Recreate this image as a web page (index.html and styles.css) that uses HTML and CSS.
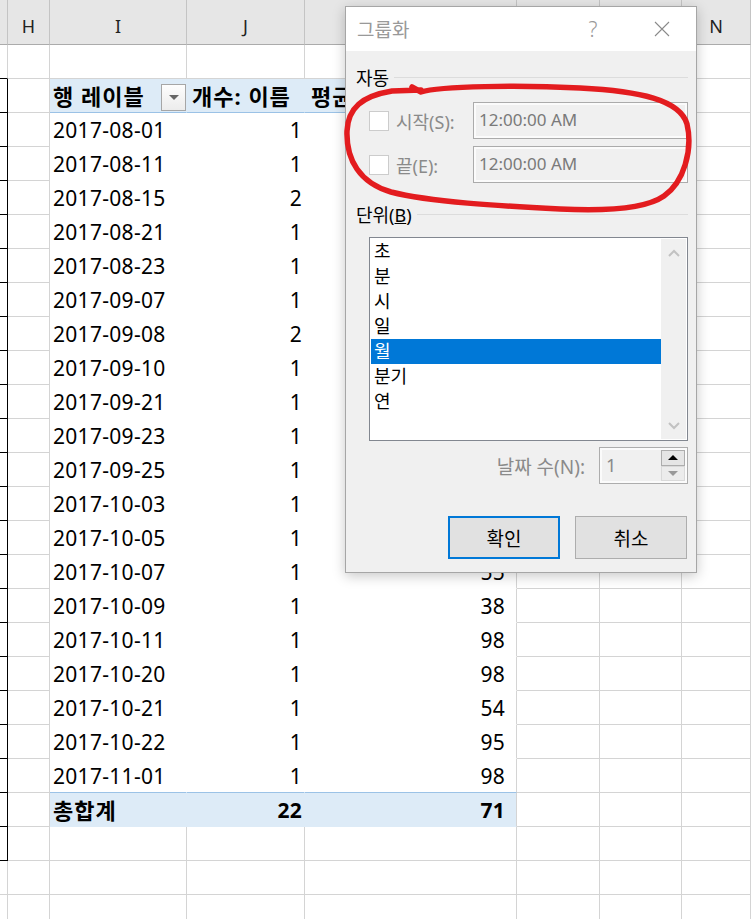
FILE: index.html
```html
<!DOCTYPE html>
<html lang="ko">
  <head>
    <meta charset="UTF-8" />
    <title>그룹화</title>
    <link rel="stylesheet" href="styles.css">
  </head>
  <body>
    <table class="sheet">
      <colgroup>
        <col style="width:8px"><col style="width:42px"><col style="width:137px"><col style="width:118px">
        <col style="width:212px"><col style="width:83px"><col style="width:82px"><col style="width:69px">
      </colgroup>
      <thead>
        <!-- K, L, M sit under the dialog -->
        <tr><th></th><th>H</th><th>I</th><th>J</th><th></th><th></th><th></th><th>N</th></tr>
      </thead>
      <tbody>
        <tr><td class="g top"></td><td></td><td></td><td></td><td></td><td></td><td></td><td></td></tr>
        <tr class="pv-head">
          <td class="g"></td><td></td>
          <td class="c-i"><div class="row-label">행 레이블<span class="drop"></span></div></td>
          <td class="c-j">개수: 이름</td>
          <td class="c-k">평균</td>
          <td></td><td></td><td></td>
        </tr>
        <!-- K values under the dialog are left out -->
        <tr class="pv"><td class="g"></td><td></td><td class="c-i">2017-08-01</td><td class="c-j num">1</td><td class="c-k num"></td><td></td><td></td><td></td></tr>
        <tr class="pv"><td class="g"></td><td></td><td class="c-i">2017-08-11</td><td class="c-j num">1</td><td class="c-k num"></td><td></td><td></td><td></td></tr>
        <tr class="pv"><td class="g"></td><td></td><td class="c-i">2017-08-15</td><td class="c-j num">2</td><td class="c-k num"></td><td></td><td></td><td></td></tr>
        <tr class="pv"><td class="g"></td><td></td><td class="c-i">2017-08-21</td><td class="c-j num">1</td><td class="c-k num"></td><td></td><td></td><td></td></tr>
        <tr class="pv"><td class="g"></td><td></td><td class="c-i">2017-08-23</td><td class="c-j num">1</td><td class="c-k num"></td><td></td><td></td><td></td></tr>
        <tr class="pv"><td class="g"></td><td></td><td class="c-i">2017-09-07</td><td class="c-j num">1</td><td class="c-k num"></td><td></td><td></td><td></td></tr>
        <tr class="pv"><td class="g"></td><td></td><td class="c-i">2017-09-08</td><td class="c-j num">2</td><td class="c-k num"></td><td></td><td></td><td></td></tr>
        <tr class="pv"><td class="g"></td><td></td><td class="c-i">2017-09-10</td><td class="c-j num">1</td><td class="c-k num"></td><td></td><td></td><td></td></tr>
        <tr class="pv"><td class="g"></td><td></td><td class="c-i">2017-09-21</td><td class="c-j num">1</td><td class="c-k num"></td><td></td><td></td><td></td></tr>
        <tr class="pv"><td class="g"></td><td></td><td class="c-i">2017-09-23</td><td class="c-j num">1</td><td class="c-k num"></td><td></td><td></td><td></td></tr>
        <tr class="pv"><td class="g"></td><td></td><td class="c-i">2017-09-25</td><td class="c-j num">1</td><td class="c-k num"></td><td></td><td></td><td></td></tr>
        <tr class="pv"><td class="g"></td><td></td><td class="c-i">2017-10-03</td><td class="c-j num">1</td><td class="c-k num"></td><td></td><td></td><td></td></tr>
        <tr class="pv"><td class="g"></td><td></td><td class="c-i">2017-10-05</td><td class="c-j num">1</td><td class="c-k num"></td><td></td><td></td><td></td></tr>
        <tr class="pv"><td class="g"></td><td></td><td class="c-i">2017-10-07</td><td class="c-j num">1</td><td class="c-k num">55</td><td></td><td></td><td></td></tr>
        <tr class="pv"><td class="g"></td><td></td><td class="c-i">2017-10-09</td><td class="c-j num">1</td><td class="c-k num">38</td><td></td><td></td><td></td></tr>
        <tr class="pv"><td class="g"></td><td></td><td class="c-i">2017-10-11</td><td class="c-j num">1</td><td class="c-k num">98</td><td></td><td></td><td></td></tr>
        <tr class="pv"><td class="g"></td><td></td><td class="c-i">2017-10-20</td><td class="c-j num">1</td><td class="c-k num">98</td><td></td><td></td><td></td></tr>
        <tr class="pv"><td class="g"></td><td></td><td class="c-i">2017-10-21</td><td class="c-j num">1</td><td class="c-k num">54</td><td></td><td></td><td></td></tr>
        <tr class="pv"><td class="g"></td><td></td><td class="c-i">2017-10-22</td><td class="c-j num">1</td><td class="c-k num">95</td><td></td><td></td><td></td></tr>
        <tr class="pv last"><td class="g"></td><td></td><td class="c-i">2017-11-01</td><td class="c-j num">1</td><td class="c-k num">98</td><td></td><td></td><td></td></tr>
        <tr class="pv-total"><td class="g"></td><td></td><td class="c-i">총합계</td><td class="c-j num">22</td><td class="c-k num">71</td><td></td><td></td><td></td></tr>
        <tr><td class="g"></td><td></td><td></td><td></td><td></td><td></td><td></td><td></td></tr>
        <tr><td></td><td></td><td></td><td></td><td></td><td></td><td></td><td></td></tr>
        <tr><td></td><td></td><td></td><td></td><td></td><td></td><td></td><td></td></tr>
      </tbody>
    </table>

    <div class="dialog">
      <div class="dlg-title">
        <span>그룹화</span>
        <span class="help">?</span>
        <span class="close">
          <svg width="16" height="16" viewBox="0 0 16 16"><path d="M1 1 L15 15 M15 1 L1 15" stroke="#8a8a8a" stroke-width="1.1" fill="none"/></svg>
        </span>
      </div>
      <div class="dlg-body">
        <div class="group"><span>자동</span><i class="rule"></i></div>
        <div class="field first">
          <label class="check"><span class="box"></span>시작(S):</label>
          <div class="textbox">12:00:00 AM</div>
        </div>
        <div class="field">
          <label class="check"><span class="box"></span>끝(E):</label>
          <div class="textbox">12:00:00 AM</div>
        </div>
        <div class="group unit"><span>단위(<u>B</u>)</span><i class="rule"></i></div>
        <div class="listbox">
          <ul>
            <li>초</li>
            <li>분</li>
            <li>시</li>
            <li>일</li>
            <li class="sel">월</li>
            <li>분기</li>
            <li>연</li>
          </ul>
          <div class="vscroll">
            <svg width="12" height="8" viewBox="0 0 12 8"><path d="M1 7 L6 2 L11 7" stroke="#c2c2c2" stroke-width="2" fill="none"/></svg>
            <svg width="12" height="8" viewBox="0 0 12 8"><path d="M1 1 L6 6 L11 1" stroke="#c2c2c2" stroke-width="2" fill="none"/></svg>
          </div>
        </div>
        <div class="spin-row">
          <span>날짜 수(N):</span>
          <div class="spin">
            <span class="val">1</span>
            <div class="arrows">
              <span class="up"><i></i></span>
              <span class="down"><i></i></span>
            </div>
          </div>
        </div>
        <div class="buttons">
          <button class="btn default">확인</button>
          <button class="btn">취소</button>
        </div>
      </div>
    </div>

    <!-- red pen mark around the start / end fields -->
    <svg class="markup" width="751" height="919" viewBox="0 0 751 919">
      <path d="M412 87 L421 92 C440 86 520 85 580 88 C640 91 680 100 687 124 C693 150 684 182 664 196 C644 210 600 211 560 209 C500 206 430 202 391 192 C360 183 346 160 347 131 C348 108 362 96 392 91 L421 90"
            stroke="#e31c1f" stroke-width="5.5" fill="none" stroke-linecap="round" stroke-linejoin="round"/>
    </svg>
  </body>
</html>
```

FILE: styles.css
```css
* {
  box-sizing: border-box;
}
body {
  margin: 0;
  width: 751px;
  height: 919px;
  overflow: hidden;
  position: relative;
  background: #fff;
  font-family: "Noto Sans", "Noto Sans CJK KR", sans-serif;
}

/* sheet */
.sheet {
  border-collapse: separate;
  border-spacing: 0;
  table-layout: fixed;
  width: 751px;
  font-size: 21px;
  letter-spacing: 0.3px;
  color: #000;
}
.sheet thead tr {
  height: 45px;
}
.sheet th {
  background: #e6e6e6;
  border-right: 1px solid #c4c4c4;
  border-bottom: 1px solid #ababab;
  font-weight: normal;
  font-size: 18px;
  letter-spacing: 0;
  color: #222;
  padding: 8px 0 0;
}
.sheet tbody tr {
  height: 34px;
}
.sheet td {
  border-right: 1px solid #d4d4d4;
  border-bottom: 1px solid #d4d4d4;
  padding: 0;
  line-height: 24px;
  white-space: nowrap;
  overflow: hidden;
}
.sheet td.g {
  border-right-color: #000;
  border-bottom-color: #000;
}
.sheet td.g.top {
  border-right-color: #d4d4d4;
}
.c-i {
  padding-left: 3px !important;
}
.c-j.num {
  padding-right: 2px !important;
}
.c-k.num {
  padding-right: 11px !important;
}
.num {
  text-align: right;
}

/* pivot */
.pv-head td.c-i,
.pv-head td.c-j,
.pv-head td.c-k {
  background: #ddebf7;
  font-weight: bold;
  font-size: 22px;
  letter-spacing: 1px;
  border-bottom-color: #9bc2e6;
}
.pv-head td.c-i,
.pv-head td.c-j {
  border-right-color: #ddebf7;
}
.pv-head td.c-j {
  padding-left: 5px;
}
.pv-head td.c-k {
  padding-left: 6px;
}
.row-label {
  display: flex;
  align-items: center;
}
.drop {
  margin-left: auto;
  width: 25px;
  height: 27px;
  border: 1px solid #a6a6a6;
  background: linear-gradient(#fdfdfd, #ececec);
  display: flex;
  align-items: center;
  justify-content: center;
  margin-top: 4px;
}
.drop::after {
  content: "";
  border-left: 5px solid transparent;
  border-right: 5px solid transparent;
  border-top: 5px solid #666;
}
.pv td.c-i,
.pv td.c-j {
  border-right-color: #fff;
}
.pv td.c-i,
.pv td.c-j,
.pv td.c-k {
  border-bottom-color: #fff;
}
.pv.last td.c-i,
.pv.last td.c-j,
.pv.last td.c-k {
  border-bottom-color: #9bc2e6;
}
.pv-total td.c-i,
.pv-total td.c-j,
.pv-total td.c-k {
  background: #ddebf7;
  font-weight: bold;
  border-bottom-color: #ddebf7;
}
.pv-total td.c-i {
  font-size: 22px;
  letter-spacing: 1px;
}
.pv-total td.c-i,
.pv-total td.c-j {
  border-right-color: #ddebf7;
}

/* dialog */
.dialog {
  position: absolute;
  left: 345px;
  top: 6px;
  width: 352px;
  background: #f0f0f0;
  border: 1px solid #a6a6a6;
  box-shadow: 0 3px 12px rgba(0, 0, 0, 0.22);
  font-size: 18px;
  color: #000;
}
.dlg-title {
  height: 44px;
  background: #fff;
  display: flex;
  align-items: center;
  padding-left: 11px;
  color: #999;
  font-size: 19px;
}
.dlg-title .help {
  margin-left: auto;
  margin-right: 31px;
  width: 30px;
  text-align: center;
  font-size: 21px;
  font-weight: 300;
}
.dlg-title .close {
  width: 46px;
  margin-right: 11px;
  display: flex;
  justify-content: center;
}
.dlg-body {
  padding: 14px 8px 13px 10px;
}
.group {
  display: flex;
  align-items: center;
  gap: 5px;
  height: 24px;
  font-size: 18px;
}
.group .rule {
  flex: 1;
  height: 1px;
  background: #dcdcdc;
}
.group.unit {
  margin-top: 19px;
}
.field {
  display: flex;
  align-items: center;
  margin: 7px 0 0 13px;
  height: 37px;
}
.field.first {
  margin-top: 13px;
}
.check {
  flex: 1;
  display: flex;
  align-items: center;
  gap: 7px;
  color: #8a8a8a;
}
.check .box {
  width: 20px;
  height: 20px;
  border: 1px solid #cccccc;
  background: #fff;
}
.textbox {
  width: 215px;
  height: 37px;
  border: 1px solid #ababab;
  background: #f0f0f0;
  box-shadow: inset 0 0 0 2px #fbfbfb;
  color: #7a7a7a;
  padding-left: 5px;
  line-height: 34px;
  font-size: 17px;
}
.listbox {
  margin: 11px 0 0 13px;
  height: 204px;
  border: 1px solid #828790;
  background: #fff;
  padding: 1px;
  display: flex;
}
.listbox ul {
  flex: 1;
  list-style: none;
  margin: 0;
  padding: 0;
}
.listbox li {
  height: 25px;
  line-height: 25px;
  padding-left: 3px;
  font-size: 18px;
}
.listbox li.sel {
  background: #0078d7;
  color: #fff;
}
.vscroll {
  width: 25px;
  background: #f0f0f0;
  display: flex;
  flex-direction: column;
  justify-content: space-between;
  align-items: center;
  padding: 10px 0 9px;
}
.spin-row {
  display: flex;
  justify-content: flex-end;
  align-items: center;
  gap: 14px;
  margin-top: 6px;
  color: #8a8a8a;
  font-size: 19px;
}
.spin {
  width: 89px;
  height: 37px;
  border: 1px solid #adadad;
  background: #f0f0f0;
  box-shadow: inset 0 0 0 2px #fbfbfb;
  padding: 2px;
  display: flex;
  justify-content: space-between;
}
.spin .val {
  padding-left: 4px;
  line-height: 31px;
  font-size: 18px;
}
.arrows {
  width: 24px;
  display: flex;
  flex-direction: column;
}
.arrows span {
  flex: 1;
  display: flex;
  align-items: center;
  justify-content: center;
}
.arrows .up {
  background: #e5e5e5;
  border: 1px solid #adadad;
}
.arrows .up i {
  border-left: 5px solid transparent;
  border-right: 5px solid transparent;
  border-bottom: 5px solid #000;
}
.arrows .down {
  background: #ececec;
  border: 1px solid #d9d9d9;
}
.arrows .down i {
  border-left: 5px solid transparent;
  border-right: 5px solid transparent;
  border-top: 5px solid #999;
}
.buttons {
  display: flex;
  justify-content: flex-end;
  gap: 15px;
  margin-top: 32px;
  padding-right: 1px;
}
.btn {
  width: 112px;
  height: 43px;
  background: #e1e1e1;
  border: 1px solid #adadad;
  font: inherit;
  font-size: 19px;
  color: #000;
  padding: 0;
}
.btn.default {
  border: 2px solid #0078d7;
}

/* pen mark */
.markup {
  position: absolute;
  left: 0;
  top: 0;
  pointer-events: none;
}
```
